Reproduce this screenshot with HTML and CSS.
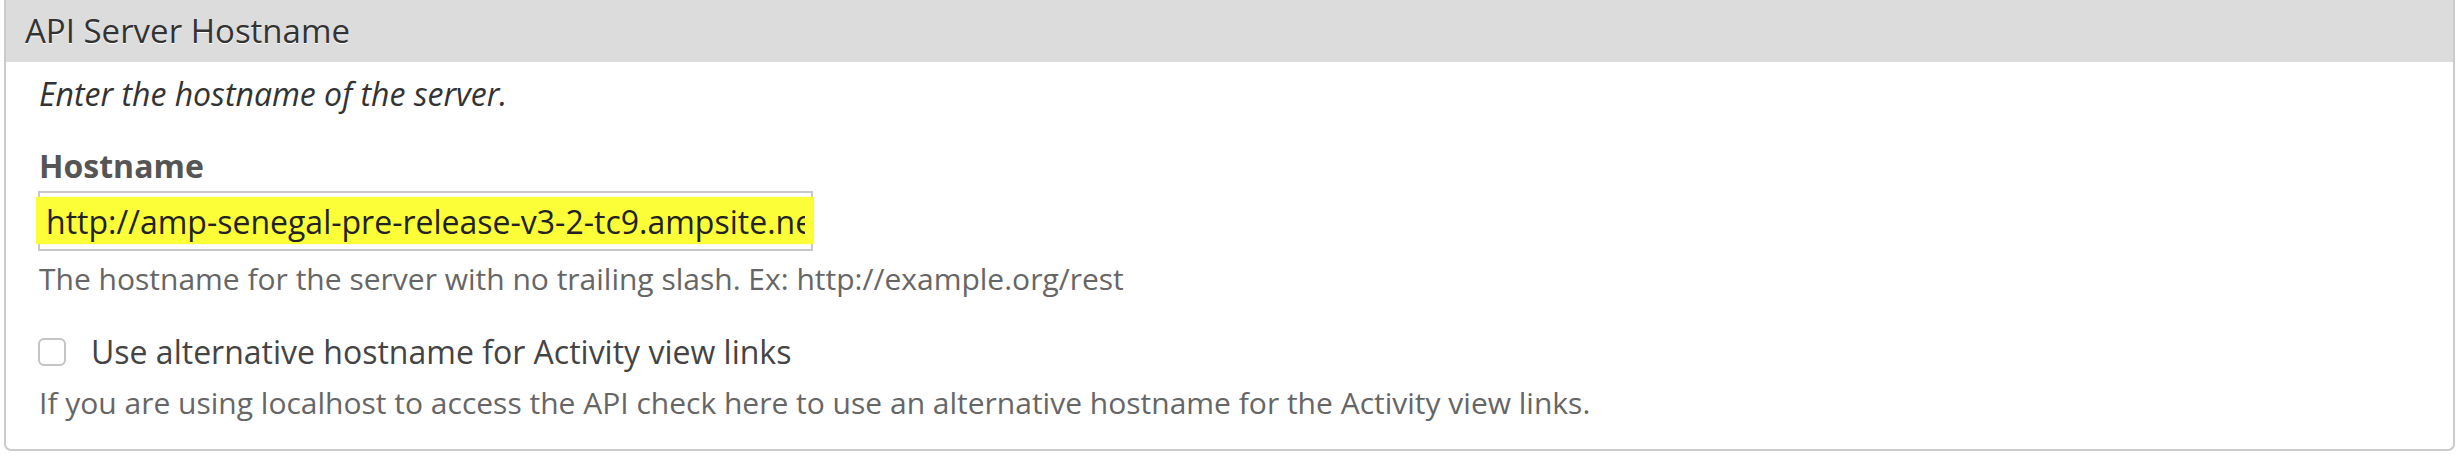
FILE: index.html
```html
<!DOCTYPE html>
<html>
<head>
<meta charset="utf-8">
<link rel="stylesheet" href="styles.css">
</head>
<body>
<div class="panel">
  <div class="panel-head">API Server Hostname</div>
  <div class="panel-body">
    <div class="intro">Enter the hostname of the server.</div>
    <div class="field">
      <label class="field-label" for="hostname">Hostname</label>
      <div class="input-box">
        <div class="highlight"></div>
        <input id="hostname" class="input-text" type="text" value="http://amp-senegal-pre-release-v3-2-tc9.ampsite.net/rest">
      </div>
      <div class="help">The hostname for the server with no trailing slash. Ex: http://example.org/rest</div>
    </div>
    <div class="field check-field">
      <label class="check-row">
        <input type="checkbox" class="checkbox">
        <span class="check-label">Use alternative hostname for Activity view links</span>
      </label>
      <div class="help desc">If you are using localhost to access the API check here to use an alternative hostname for the Activity view links.</div>
    </div>
  </div>
</div>
</body>
</html>
```

FILE: styles.css
```css
html, body {
  margin: 0;
  padding: 0;
  background: #fff;
}
body {
  font-family: "Open Sans", "Liberation Sans", sans-serif;
  color: #333;
}
.panel {
  margin: 0 5px 0 4px;
  height: 451px;
  box-sizing: border-box;
  border: 2px solid #cbcbcb;
  border-top: none;
  border-radius: 0 0 7px 7px;
  display: flex;
  flex-direction: column;
}
.panel-head {
  height: 62px;
  flex: none;
  background: #dcdcdc;
  font-size: 33px;
  line-height: 62px;
  padding-left: 19px;
  color: #333;
  text-shadow: 0 1px 0 #fff;
}
.panel-body {
  padding: 0 0 0 33px;
  display: flex;
  flex-direction: column;
}
.intro {
  font-style: italic;
  font-size: 32px;
  line-height: 40px;
  margin-top: 12px;
  color: #333;
}
.field {
  display: flex;
  flex-direction: column;
}
.field-label {
  font-weight: bold;
  font-size: 32px;
  line-height: 40px;
  margin-top: 32px;
  color: #555;
}
.input-box {
  position: relative;
  box-sizing: border-box;
  width: 775px;
  height: 60px;
  margin-top: 5px;
  margin-left: -1px;
  border: 2px solid #c8c8c8;
}
.highlight {
  position: absolute;
  top: 4px;
  bottom: 5px;
  left: -4px;
  right: -3px;
  background: #fcff38;
  box-shadow: 0 0 1px #fcff38;
}
.input-text {
  position: relative;
  display: block;
  box-sizing: border-box;
  width: 100%;
  height: 56px;
  margin: 0;
  padding: 0 6px 0 6px;
  border: none;
  outline: none;
  background: transparent;
  font-family: "Open Sans", "Liberation Sans", sans-serif;
  font-size: 32px;
  color: #222;
}
.help {
  font-size: 30px;
  line-height: 40px;
  color: #666;
  margin-top: 8px;
}
.check-field {
  margin-top: 33px;
}
.check-row {
  display: flex;
  align-items: center;
  gap: 25px;
  height: 40px;
}
.checkbox {
  appearance: none;
  -webkit-appearance: none;
  flex: none;
  box-sizing: border-box;
  width: 28px;
  height: 28px;
  margin: 0 0 0 -1px;
  border: 2px solid #c4c4c4;
  border-radius: 6px;
  background: #fff;
}
.check-label {
  font-size: 32px;
  line-height: 40px;
  color: #444;
}
.desc {
  margin-top: 11px;
}
```
